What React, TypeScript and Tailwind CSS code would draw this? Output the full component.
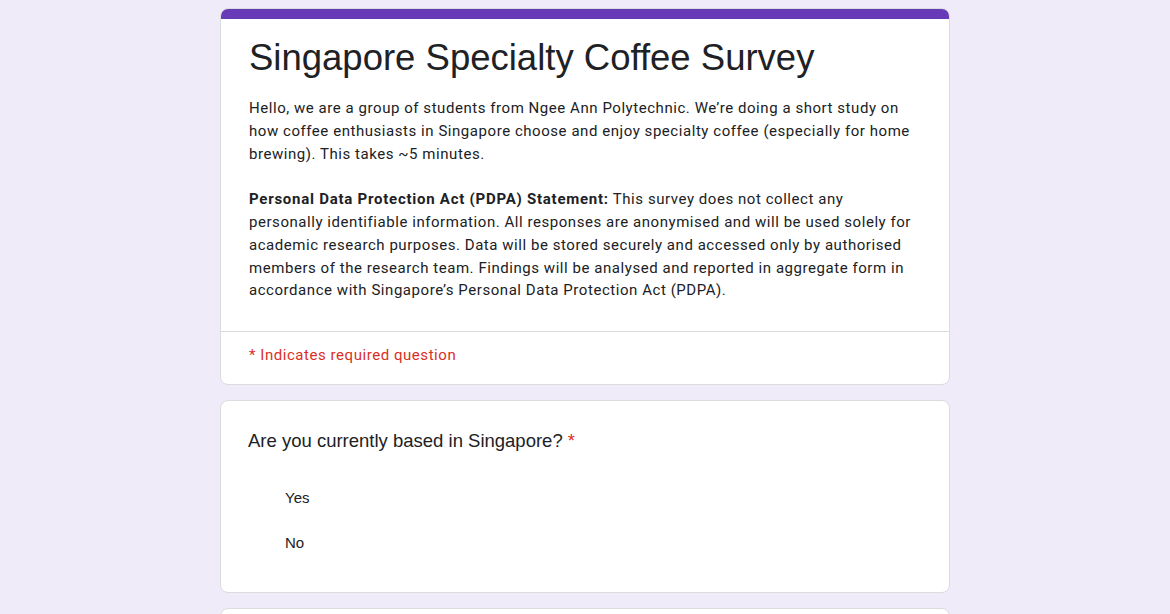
import React from "react";

const sans = "font-['Liberation_Sans',Arial,sans-serif]";
const roboto = "font-['Roboto','Noto_Sans',sans-serif]";

function Option({ label }: { label: string }) {
  return (
    <div className={`${sans} h-[45px] flex items-center pl-9 text-[15px] text-[#202124]`}>
      {label}
    </div>
  );
}

export default function App() {
  return (
    <div className="min-h-screen bg-[#f0ebf8] pt-2 overflow-hidden">
      <div className="w-[730px] mx-auto space-y-[15px]">
        {/* Header card */}
        <div className="bg-white rounded-lg border border-[#dadce0] overflow-hidden">
          <div className="h-[10px] bg-[#673ab7]" />
          <div className="pl-7 pr-[35px] pt-[15px] pb-[29px]">
            <h1 className={`${sans} text-[36.5px] leading-[48px] text-[#202124] whitespace-nowrap`}>
              Singapore Specialty Coffee Survey
            </h1>
            <div className={`${roboto} mt-[15px] text-[15px] leading-[22.8px] tracking-[0.55px] text-[#202124]`}>
              <p>
                Hello, we are a group of students from Ngee Ann Polytechnic. We’re doing a short study on how
                coffee enthusiasts in Singapore choose and enjoy specialty coffee (especially for home brewing).
                This takes ~5 minutes.
              </p>
              <br />
              <p>
                <span className="font-bold tracking-[0.75px]">Personal Data Protection Act (PDPA) Statement:</span>{" "}
                This survey does not collect any personally identifiable information. All responses are anonymised
                and will be used solely for academic research purposes. Data will be stored securely and accessed
                only by authorised members of the research team. Findings will be analysed and reported in
                aggregate form in accordance with Singapore’s Personal Data Protection Act (PDPA).
              </p>
            </div>
          </div>
          <div className="border-t border-[#dadce0]" />
          <div className={`${roboto} px-7 pt-[12px] pb-[18px] text-[15px] leading-[22px] tracking-[0.55px] text-[#d93025]`}>
            * Indicates required question
          </div>
        </div>

        {/* Question card */}
        <div className="bg-white rounded-lg border border-[#dadce0] px-7 pt-[28px] pb-[26px]">
          <div className={`${sans} text-[18.5px] leading-[24px] text-[#202124] -ml-px`}>
            Are you currently based in Singapore? <span className="text-[#d93025]">*</span>
          </div>
          <div className="mt-[23px]">
            <Option label="Yes" />
            <Option label="No" />
          </div>
        </div>

        {/* Next card (cut off) */}
        <div className="bg-white rounded-lg border border-[#dadce0] h-[200px]" />
      </div>
    </div>
  );
}
